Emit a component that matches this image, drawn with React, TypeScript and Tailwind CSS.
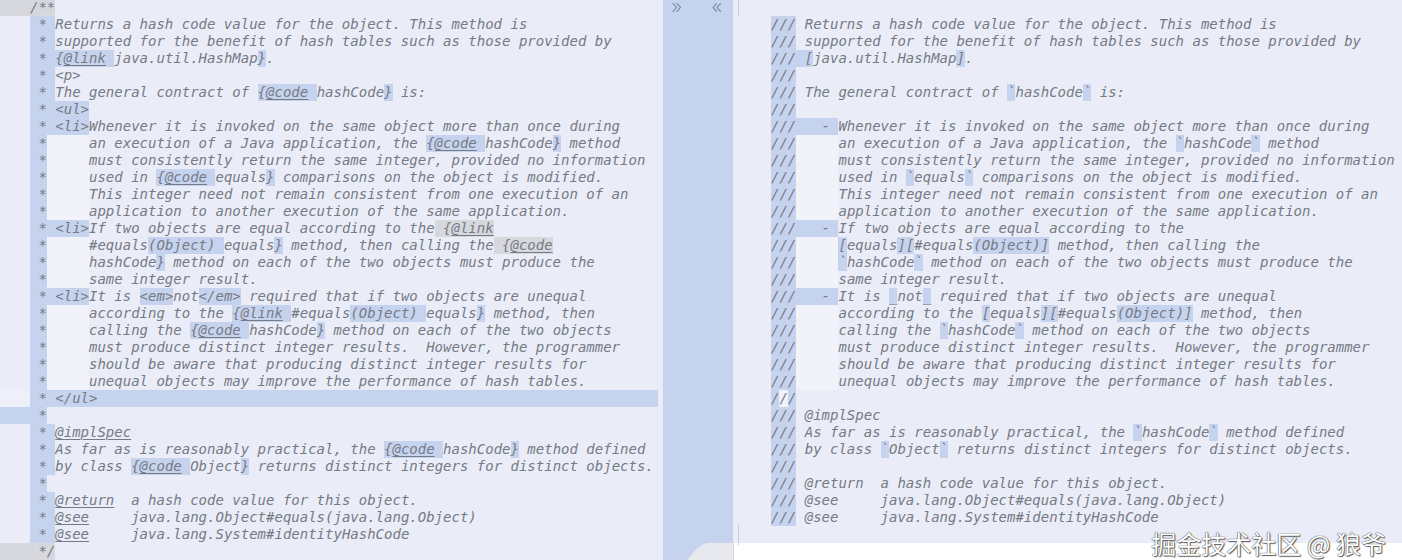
import React from "react";

type Bg = "n" | "b" | "g" | "w";
type Seg = { t: string; bg: Bg };

function parse(s: string): Seg[] {
  const segs: Seg[] = [];
  let cur = "";
  let bg: Bg = "n";
  const flush = () => {
    if (cur) segs.push({ t: cur, bg });
    cur = "";
  };
  for (const ch of s) {
    if (ch === "⟨") {
      flush();
      bg = "b";
    } else if (ch === "⦃") {
      flush();
      bg = "g";
    } else if (ch === "⟪") {
      flush();
      bg = "w";
    } else if (ch === "⟩" || ch === "⦄" || ch === "⟫") {
      flush();
      bg = "n";
    } else cur += ch;
  }
  flush();
  return segs;
}

const BG: Record<Bg, string> = {
  n: "",
  b: "bg-[#c6d3ee]",
  g: "bg-[#d7d8de]",
  w: "bg-[#f1f2fa]",
};

function Text({ s, tags }: { s: string; tags: boolean }) {
  if (!tags) return <>{s}</>;
  const parts = s.split(/(@(?:link|code|implSpec|return|see))/);
  return (
    <>
      {parts.map((p, i) =>
        i % 2 === 1 ? (
          <span key={i} className="underline decoration-[1px] underline-offset-[2px]">
            {p}
          </span>
        ) : (
          <React.Fragment key={i}>{p}</React.Fragment>
        )
      )}
    </>
  );
}

function Line({ s, tags }: { s: string; tags: boolean }) {
  return (
    <div className="whitespace-pre">
      {parse(s).map((seg, i) => (
        <span key={i} className={`inline-block h-[17px] ${BG[seg.bg]}`}>
          <Text s={seg.t} tags={tags} />
        </span>
      ))}
    </div>
  );
}

type Row = { s: string; g?: string; full?: boolean };

const CONT = "⟨ *⟩⟪     ⟫";

const left: Row[] = [
  { s: "⦃/**⦄", g: "bg-[#d7d8de]" },
  { s: "⟨ * ⟩Returns a hash code value for the object. This method is" },
  { s: "⟨ * ⟩supported for the benefit of hash tables such as those provided by" },
  { s: "⟨ * {@link ⟩java.util.HashMap⟨}⟩." },
  { s: "⟨ * ⟩<p>" },
  { s: "⟨ * ⟩The general contract of ⟨{@code ⟩hashCode⟨}⟩ is:" },
  { s: "⟨ * <ul>⟩" },
  { s: "⟨ * <li>⟩Whenever it is invoked on the same object more than once during" },
  { s: CONT + "an execution of a Java application, the ⟨{@code ⟩hashCode⟨}⟩ method" },
  { s: CONT + "must consistently return the same integer, provided no information" },
  { s: CONT + "used in ⟨{@code ⟩equals⟨}⟩ comparisons on the object is modified." },
  { s: CONT + "This integer need not remain consistent from one execution of an" },
  { s: CONT + "application to another execution of the same application." },
  { s: "⟨ * <li>⟩If two objects are equal according to the⦃ {@link⦄" },
  { s: CONT + "#equals⟨(Object) ⟩equals⟨}⟩ method, then calling the⦃ {@code⦄" },
  { s: CONT + "hashCode⟨}⟩ method on each of the two objects must produce the" },
  { s: CONT + "same integer result." },
  { s: "⟨ * <li>⟩It is ⟨<em>⟩not⟨</em>⟩ required that if two objects are unequal" },
  { s: CONT + "according to the ⟨{@link ⟩#equals⟨(Object) ⟩equals⟨}⟩ method, then" },
  { s: CONT + "calling the ⟨{@code ⟩hashCode⟨}⟩ method on each of the two objects" },
  { s: CONT + "must produce distinct integer results.  However, the programmer" },
  { s: CONT + "should be aware that producing distinct integer results for" },
  { s: CONT + "unequal objects may improve the performance of hash tables." },
  { s: " * </ul>", full: true, g: "bg-[#eef0f9]" },
  { s: "⟨ *⟩", g: "bg-[#c6d3ee]" },
  { s: "⟨ * ⟩@implSpec" },
  { s: "⟨ * ⟩As far as is reasonably practical, the ⟨{@code ⟩hashCode⟨}⟩ method defined" },
  { s: "⟨ * ⟩by class ⟨{@code ⟩Object⟨}⟩ returns distinct integers for distinct objects." },
  { s: "⟨ *⟩" },
  { s: "⟨ * ⟩@return  a hash code value for this object." },
  { s: "⟨ * ⟩@see     java.lang.Object#equals(java.lang.Object)" },
  { s: "⟨ * ⟩@see     java.lang.System#identityHashCode" },
  { s: "⦃ */⦄", g: "bg-[#d7d8de]" },
];

const RC = "⟨///⟩⟪     ⟫";

const right: string[] = [
  "",
  "⟨///⟩ Returns a hash code value for the object. This method is",
  "⟨///⟩ supported for the benefit of hash tables such as those provided by",
  "⟨/// [⟩java.util.HashMap⟨]⟩.",
  "⟨///⟩",
  "⟨///⟩ The general contract of ⟨`⟩hashCode⟨`⟩ is:",
  "⟨///⟩",
  "⟨///   - ⟩Whenever it is invoked on the same object more than once during",
  RC + "an execution of a Java application, the ⟨`⟩hashCode⟨`⟩ method",
  RC + "must consistently return the same integer, provided no information",
  RC + "used in ⟨`⟩equals⟨`⟩ comparisons on the object is modified.",
  RC + "This integer need not remain consistent from one execution of an",
  RC + "application to another execution of the same application.",
  "⟨///   - ⟩If two objects are equal according to the",
  RC + "⟨[⟩equals⟨][⟩#equals⟨(Object)]⟩ method, then calling the",
  RC + "⟨`⟩hashCode⟨`⟩ method on each of the two objects must produce the",
  RC + "same integer result.",
  "⟨///   - ⟩It is ⟨_⟩not⟨_⟩ required that if two objects are unequal",
  RC + "according to the ⟨[⟩equals⟨][⟩#equals⟨(Object)]⟩ method, then",
  RC + "calling the ⟨`⟩hashCode⟨`⟩ method on each of the two objects",
  RC + "must produce distinct integer results.  However, the programmer",
  RC + "should be aware that producing distinct integer results for",
  RC + "unequal objects may improve the performance of hash tables.",
  "⟨/⟩⟪/⟫⟨/⟩",
  "⟨///⟩ @implSpec",
  "⟨///⟩ As far as is reasonably practical, the ⟨`⟩hashCode⟨`⟩ method defined",
  "⟨///⟩ by class ⟨`⟩Object⟨`⟩ returns distinct integers for distinct objects.",
  "⟨///⟩",
  "⟨///⟩ @return  a hash code value for this object.",
  "⟨///⟩ @see     java.lang.Object#equals(java.lang.Object)",
  "⟨///⟩ @see     java.lang.System#identityHashCode",
];

function Chevrons({ dir }: { dir: "r" | "l" }) {
  const d =
    dir === "r"
      ? "M1 1.5 L4.5 5.5 L1 9.5 M5 1.5 L8.5 5.5 L5 9.5"
      : "M4.5 1.5 L1 5.5 L4.5 9.5 M8.5 1.5 L5 5.5 L8.5 9.5";
  return (
    <svg width="10" height="11" viewBox="0 0 10 11" fill="none">
      <path d={d} stroke="#6f7d9a" strokeWidth="1.1" strokeLinecap="round" strokeLinejoin="round" />
    </svg>
  );
}

export default function App() {
  return (
    <div className="relative flex h-[560px] w-[1402px] overflow-hidden bg-[#eaedf7] font-['DejaVu_Sans_Mono',monospace] text-[14px] italic text-[#767a85]">
      {/* left editor */}
      <div className="flex w-[663px] shrink-0">
        <div className="-mt-px flex w-[658px] flex-col">
          {left.map((r, i) => (
            <div key={i} className={`flex h-[17px] leading-[17px] ${r.full ? "bg-[#c6d3ee]" : ""}`}>
              <div className={`h-[17px] w-[30px] shrink-0 ${r.g ?? ""}`} />
              <Line s={r.s} tags />
            </div>
          ))}
        </div>
      </div>

      {/* divider */}
      <div className="relative flex w-[70px] shrink-0 flex-col bg-[#c6d3ee]">
        <div className="flex justify-between pl-[9px] pr-[11px] pt-[2px]">
          <Chevrons dir="r" />
          <Chevrons dir="l" />
        </div>
        <svg className="absolute bottom-0 left-0" width="70" height="18" viewBox="0 0 70 18">
          <path d="M24 18 C 32 8, 38 1, 46 1 L 70 1 L 70 18 Z" fill="#e8e9ee" />
        </svg>
      </div>

      {/* right editor */}
      <div className="flex min-w-0 flex-1 flex-col">
        <div className="relative flex h-[543px] shrink-0 flex-col">
          <div className="absolute left-[5px] top-0 h-[15px] w-px bg-[#c9cdd8]" />
          <div className="absolute left-[5px] top-[525px] h-[20px] w-px bg-[#c9cdd8]" />
          <div className="-mt-px flex flex-col">
            {right.map((s, i) => (
              <div key={i} className="flex h-[17px] leading-[17px]">
                <div className="h-[17px] w-[38px] shrink-0" />
                <Line s={s} tags={false} />
              </div>
            ))}
          </div>
        </div>
        <div className="flex-1 border-l border-[#d4d6dc] bg-white" />
      </div>

      {/* watermark */}
      <div className="absolute bottom-[3px] right-[16px] font-['Noto_Sans_CJK_SC',sans-serif] text-[25px] not-italic leading-[28px] text-white [text-shadow:0_0_1px_#444,0_0_1px_#444,1px_1px_1px_#666]">
        掘金技术社区 @ 狼爷
      </div>
    </div>
  );
}
